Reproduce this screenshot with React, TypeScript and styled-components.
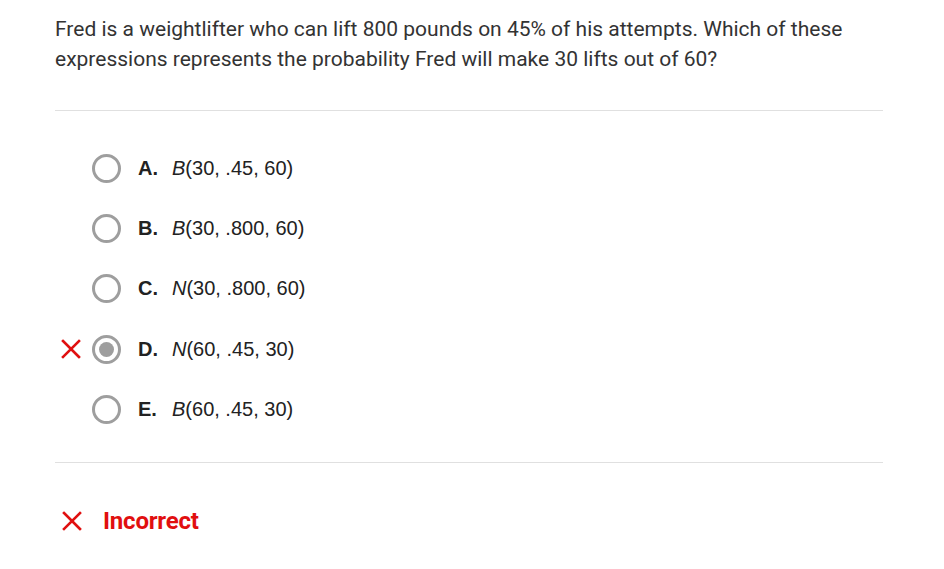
import React from "react";
import styled, { createGlobalStyle } from "styled-components";

const Global = createGlobalStyle`
  html, body { margin: 0; padding: 0; background: #fff; }
  body { font-family: Roboto, "Liberation Sans", sans-serif; }
`;

const Page = styled.div`
  padding: 14px 61px 0 55px;
`;

const Question = styled.p`
  margin: 0 0 36px 0;
  font-family: Roboto, sans-serif;
  font-size: 21px;
  line-height: 30px;
  color: #333;
`;

const Divider = styled.hr`
  border: none;
  border-top: 1px solid #e0e0e0;
  margin: 0;
`;

const Options = styled.div`
  display: flex;
  flex-direction: column;
  padding: 27px 0 22px 0;
`;

const Row = styled.div`
  display: flex;
  align-items: center;
  height: 60.4px;
`;

const Mark = styled.div`
  width: 37px;
  display: flex;
  align-items: center;
  justify-content: flex-start;
  padding-left: 6px;
  box-sizing: border-box;
`;

const Radio = styled.div<{ $checked?: boolean }>`
  width: 29px;
  height: 29px;
  box-sizing: border-box;
  border: 3px solid #9e9e9e;
  border-radius: 50%;
  display: flex;
  align-items: center;
  justify-content: center;
  &::after {
    content: "";
    display: ${(p) => (p.$checked ? "block" : "none")};
    width: 15px;
    height: 15px;
    border-radius: 50%;
    background: #9e9e9e;
  }
`;

const Letter = styled.span`
  font-family: "Liberation Sans", Arial, sans-serif;
  font-weight: 700;
  font-size: 20px;
  color: #222;
  margin-left: 17px;
  width: 34px;
`;

const Expr = styled.span`
  font-family: "Liberation Sans", Arial, sans-serif;
  font-size: 20px;
  color: #222;
  i { font-style: italic; }
`;

const Feedback = styled.div`
  display: flex;
  align-items: center;
  padding: 44px 0 0 7px;
  gap: 21px;
`;

const FeedbackText = styled.span`
  font-family: Roboto, sans-serif;
  font-weight: 700;
  font-size: 24px;
  color: #e10f0f;
  letter-spacing: -0.2px;
`;

const Cross = ({ size = 20 }: { size?: number }) => (
  <svg width={size} height={size} viewBox="0 0 20 20">
    <path d="M2 2 L18 18 M18 2 L2 18" stroke="#e01010" strokeWidth="2.6" strokeLinecap="square" />
  </svg>
);

const options = [
  { l: "A.", f: "B", a: "(30, .45, 60)" },
  { l: "B.", f: "B", a: "(30, .800, 60)" },
  { l: "C.", f: "N", a: "(30, .800, 60)" },
  { l: "D.", f: "N", a: "(60, .45, 30)", chosen: true },
  { l: "E.", f: "B", a: "(60, .45, 30)" },
];

export default function App() {
  return (
    <Page>
      <Global />
      <Question>
        Fred is a weightlifter who can lift 800 pounds on 45% of his attempts. Which of these
        expressions represents the probability Fred will make 30 lifts out of 60?
      </Question>
      <Divider />
      <Options>
        {options.map((o) => (
          <Row key={o.l}>
            <Mark>{o.chosen ? <Cross /> : null}</Mark>
            <Radio $checked={o.chosen} />
            <Letter>{o.l}</Letter>
            <Expr>
              <i>{o.f}</i>
              {o.a}
            </Expr>
          </Row>
        ))}
      </Options>
      <Divider />
      <Feedback>
        <Cross />
        <FeedbackText>Incorrect</FeedbackText>
      </Feedback>
    </Page>
  );
}
